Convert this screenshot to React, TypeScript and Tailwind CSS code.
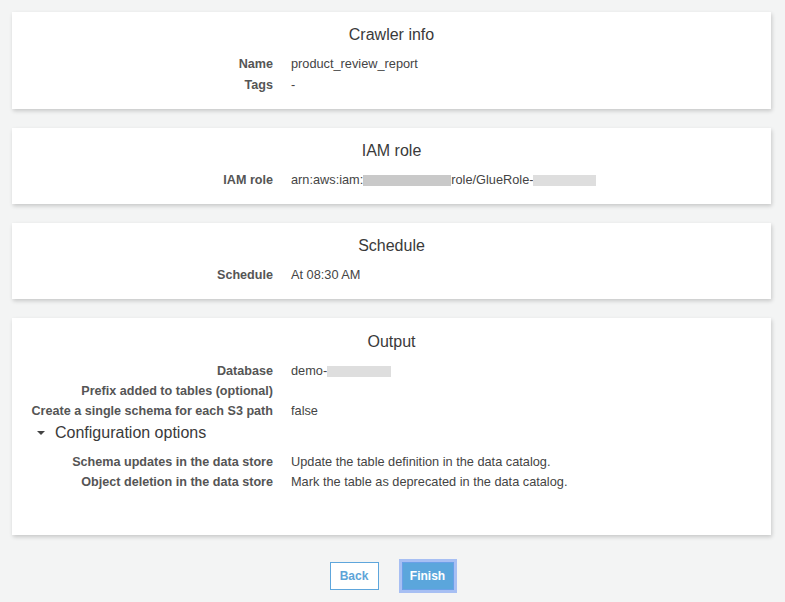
import React from 'react';

type Row = { label: string; value: React.ReactNode };

function Blur({ w, shade }: { w: string; shade: 'dark' | 'light' }) {
  return (
    <span
      className={`inline-block h-[11px] align-[-1px] ${w} ${
        shade === 'dark' ? 'bg-[#c9c9c9]' : 'bg-[#dedede]'
      }`}
    />
  );
}

function Rows({ rows }: { rows: Row[] }) {
  return (
    <div className="flex flex-col">
      {rows.map((r) => (
        <div key={r.label} className="flex h-[20px] items-center">
          <div className="w-[261px] shrink-0 text-right font-bold text-[12.6px] text-[#555]">
            {r.label}
          </div>
          <div className="pl-[18px] text-[12.75px] text-[#444] whitespace-nowrap">{r.value}</div>
        </div>
      ))}
    </div>
  );
}

function Card({
  title,
  children,
  extra = 'pb-[14px] pt-[11px]',
}: {
  title: string;
  children: React.ReactNode;
  extra?: string;
}) {
  return (
    <div className={`bg-white shadow-[1px_2px_4px_rgba(0,0,0,0.18)] ${extra}`}>
      <h2 className="text-center text-[16px] leading-[24px] text-[#3a3a3a] mb-[7px]">
        {title}
      </h2>
      {children}
    </div>
  );
}

export default function App() {
  return (
    <div
      className="min-h-[602px] w-[785px] bg-[#f3f4f4] pt-3 pl-3 pr-[14px] text-[13px] leading-[20px]"
      style={{ fontFamily: '"Liberation Sans", Arial, sans-serif' }}
    >
      <div className="flex flex-col gap-[19px]">
        <Card title="Crawler info">
          <div className="flex flex-col gap-[1px]">
            <Rows rows={[{ label: 'Name', value: 'product_review_report' }]} />
            <Rows rows={[{ label: 'Tags', value: '-' }]} />
          </div>
        </Card>

        <Card title="IAM role">
          <Rows
            rows={[
              {
                label: 'IAM role',
                value: (
                  <span className="flex items-center">
                    arn:aws:iam:
                    <Blur w="w-[88px]" shade="dark" />
                    role/GlueRole-
                    <Blur w="w-[63px]" shade="light" />
                  </span>
                ),
              },
            ]}
          />
        </Card>

        <Card title="Schedule">
          <Rows rows={[{ label: 'Schedule', value: 'At 08:30 AM' }]} />
        </Card>

        <Card title="Output" extra="pb-[43px] pt-[12px]">
          <Rows
            rows={[
              {
                label: 'Database',
                value: (
                  <span className="flex items-center">
                    demo-
                    <Blur w="w-[64px]" shade="light" />
                  </span>
                ),
              },
              { label: 'Prefix added to tables (optional)', value: '' },
              { label: 'Create a single schema for each S3 path', value: 'false' },
            ]}
          />
          <div className="flex items-center h-[24px] pl-[25px] text-[16px] text-[#3a3a3a]">
            <span className="mr-[10px] h-0 w-0 border-x-[4px] border-t-[4px] border-x-transparent border-t-[#444]" />
            Configuration options
          </div>
          <div className="mt-[7px]">
            <Rows
              rows={[
                {
                  label: 'Schema updates in the data store',
                  value: 'Update the table definition in the data catalog.',
                },
                {
                  label: 'Object deletion in the data store',
                  value: 'Mark the table as deprecated in the data catalog.',
                },
              ]}
            />
          </div>
        </Card>
      </div>

      <div className="flex justify-center items-center gap-[23px] mt-[27px]">
        <button className="h-[28px] w-[49px] border border-[#5ea6dc] bg-white text-[12px] font-bold text-[#5ea4d8]">
          Back
        </button>
        <button className="h-[28px] w-[52px] bg-[#5ba6dc] text-[12px] font-bold text-white ring-[3px] ring-[#a7bff3] border border-[#6aa0e8]">
          Finish
        </button>
      </div>
    </div>
  );
}
